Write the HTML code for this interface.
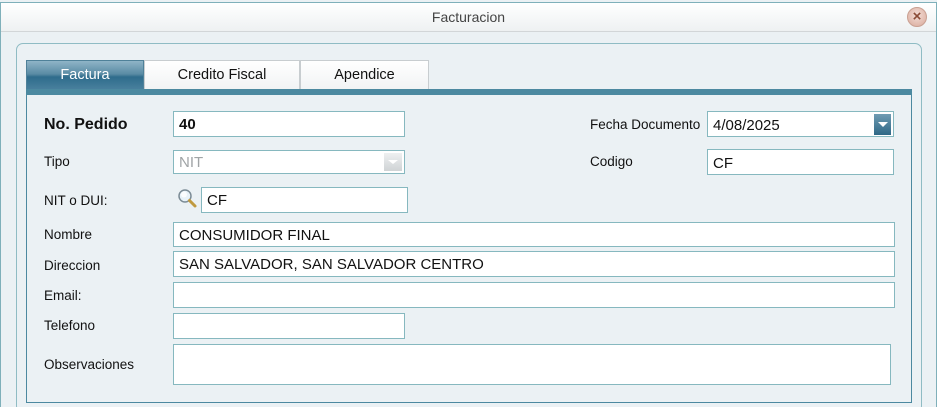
<!DOCTYPE html>
<html style="overflow:hidden;height:407px"><head><meta charset="utf-8"><style>
*{box-sizing:border-box;margin:0;padding:0}
body{width:937px;height:407px;overflow:hidden;background:#ebf1f4;font-family:"Liberation Sans",Tahoma,sans-serif;font-size:14px;color:#111;position:relative}
.win{position:absolute;left:0;top:2px;width:937px;height:405px;border:1px solid #7fb0ba;border-bottom:none;background:#ebf1f4}
.title{position:absolute;left:0;top:0;width:935px;height:29px;background:linear-gradient(#ffffff,#eef1f2);border-bottom:1px solid #d2d6d8;text-align:center;line-height:28px;color:#444;font-size:14px}
.close{position:absolute;left:906px;top:4px;width:20px;height:20px;border-radius:50%;background:radial-gradient(circle at 50% 40%,#f3ddd6,#d9a99a);border:1px solid #c9a092;color:#8a4a35;font-size:15px;line-height:18px;text-align:center;font-weight:bold}
.grp{position:absolute;left:16px;top:43px;width:906px;height:370px;border:1px solid #8fbcc4;border-radius:7px;background:#ebf1f4}
.tab{position:absolute;top:60px;height:30px;border:1px solid #c8cdd0;border-bottom:none;background:linear-gradient(#ffffff,#f1f3f4);text-align:center;line-height:29px;font-size:14.5px}
.tab.on{background:linear-gradient(#8fb4c7 0%,#5a8ba4 45%,#2f6c8c 55%,#4a819e 100%);color:#fff;border-color:#4f8199}
.bar{position:absolute;left:26px;top:89px;width:886px;height:6px;background:#4c89a0}
.pnl{position:absolute;left:26px;top:89px;width:886px;height:314px;border:1px solid #4c89a0;border-top:none}
.lbl{position:absolute;left:44px;font-size:13.5px}
.in{position:absolute;background:#fff;border:1px solid #86b8bf;padding-left:5px;font-size:15px;line-height:26px}
</style></head><body>
<div class="win">
<div class="title">Facturacion</div>
<div class="close">×</div>
</div>
<div class="grp"></div>
<div class="tab on" style="left:26px;width:118px">Factura</div>
<div class="tab" style="left:144px;width:156px">Credito Fiscal</div>
<div class="tab" style="left:300px;width:129px">Apendice</div>
<div class="bar"></div>
<div class="pnl"></div>

<div class="lbl" style="top:116px;font-weight:bold;font-size:16px">No. Pedido</div>
<div class="in" style="left:173px;top:111px;width:232px;height:26px;font-weight:bold;line-height:25px">40</div>
<div class="lbl" style="left:590px;top:117px">Fecha Documento</div>
<div class="in" style="left:707px;top:111px;width:187px;height:26px;line-height:27px">4/08/2025
<div style="position:absolute;right:2px;top:2px;width:17px;height:21px;background:linear-gradient(#6f9bb2,#2f6886)"><div style="position:absolute;left:4px;top:8px;border-left:5px solid transparent;border-right:5px solid transparent;border-top:5px solid #fff"></div></div></div>

<div class="lbl" style="top:154px">Tipo</div>
<div class="in" style="left:173px;top:150px;width:232px;height:24px;color:#a0a4a6;line-height:24px">NIT
<div style="position:absolute;right:2px;top:2px;width:18px;height:18px;background:linear-gradient(#eef0f1,#cfd3d5)"><div style="position:absolute;left:4px;top:7px;border-left:5px solid transparent;border-right:5px solid transparent;border-top:4px solid #fff"></div></div></div>
<div class="lbl" style="left:590px;top:154px">Codigo</div>
<div class="in" style="left:707px;top:149px;width:187px;height:26px;line-height:27px">CF</div>

<div class="lbl" style="top:193px">NIT o DUI:</div>
<svg style="position:absolute;left:177px;top:188px" width="22" height="22" viewBox="0 0 22 22"><circle cx="8" cy="8" r="6" fill="#e8f2f8" stroke="#7c8c96" stroke-width="1.5"/><circle cx="7" cy="6.5" r="3" fill="#fff" opacity=".8"/><path d="M12.5 12.5 L18 18" stroke="#c09a40" stroke-width="3" stroke-linecap="round"/></svg>
<div class="in" style="left:201px;top:187px;width:207px;height:26px">CF</div>

<div class="lbl" style="top:227px">Nombre</div>
<div class="in" style="left:173px;top:222px;width:722px;height:25px">CONSUMIDOR FINAL</div>
<div class="lbl" style="top:258px">Direccion</div>
<div class="in" style="left:173px;top:251px;width:722px;height:26px">SAN SALVADOR, SAN SALVADOR CENTRO</div>
<div class="lbl" style="top:288px">Email:</div>
<div class="in" style="left:173px;top:282px;width:722px;height:26px"></div>
<div class="lbl" style="top:318px">Telefono</div>
<div class="in" style="left:173px;top:313px;width:232px;height:26px"></div>
<div class="lbl" style="top:357px">Observaciones</div>
<div class="in" style="left:173px;top:344px;width:718px;height:41px"></div>
</body></html>
